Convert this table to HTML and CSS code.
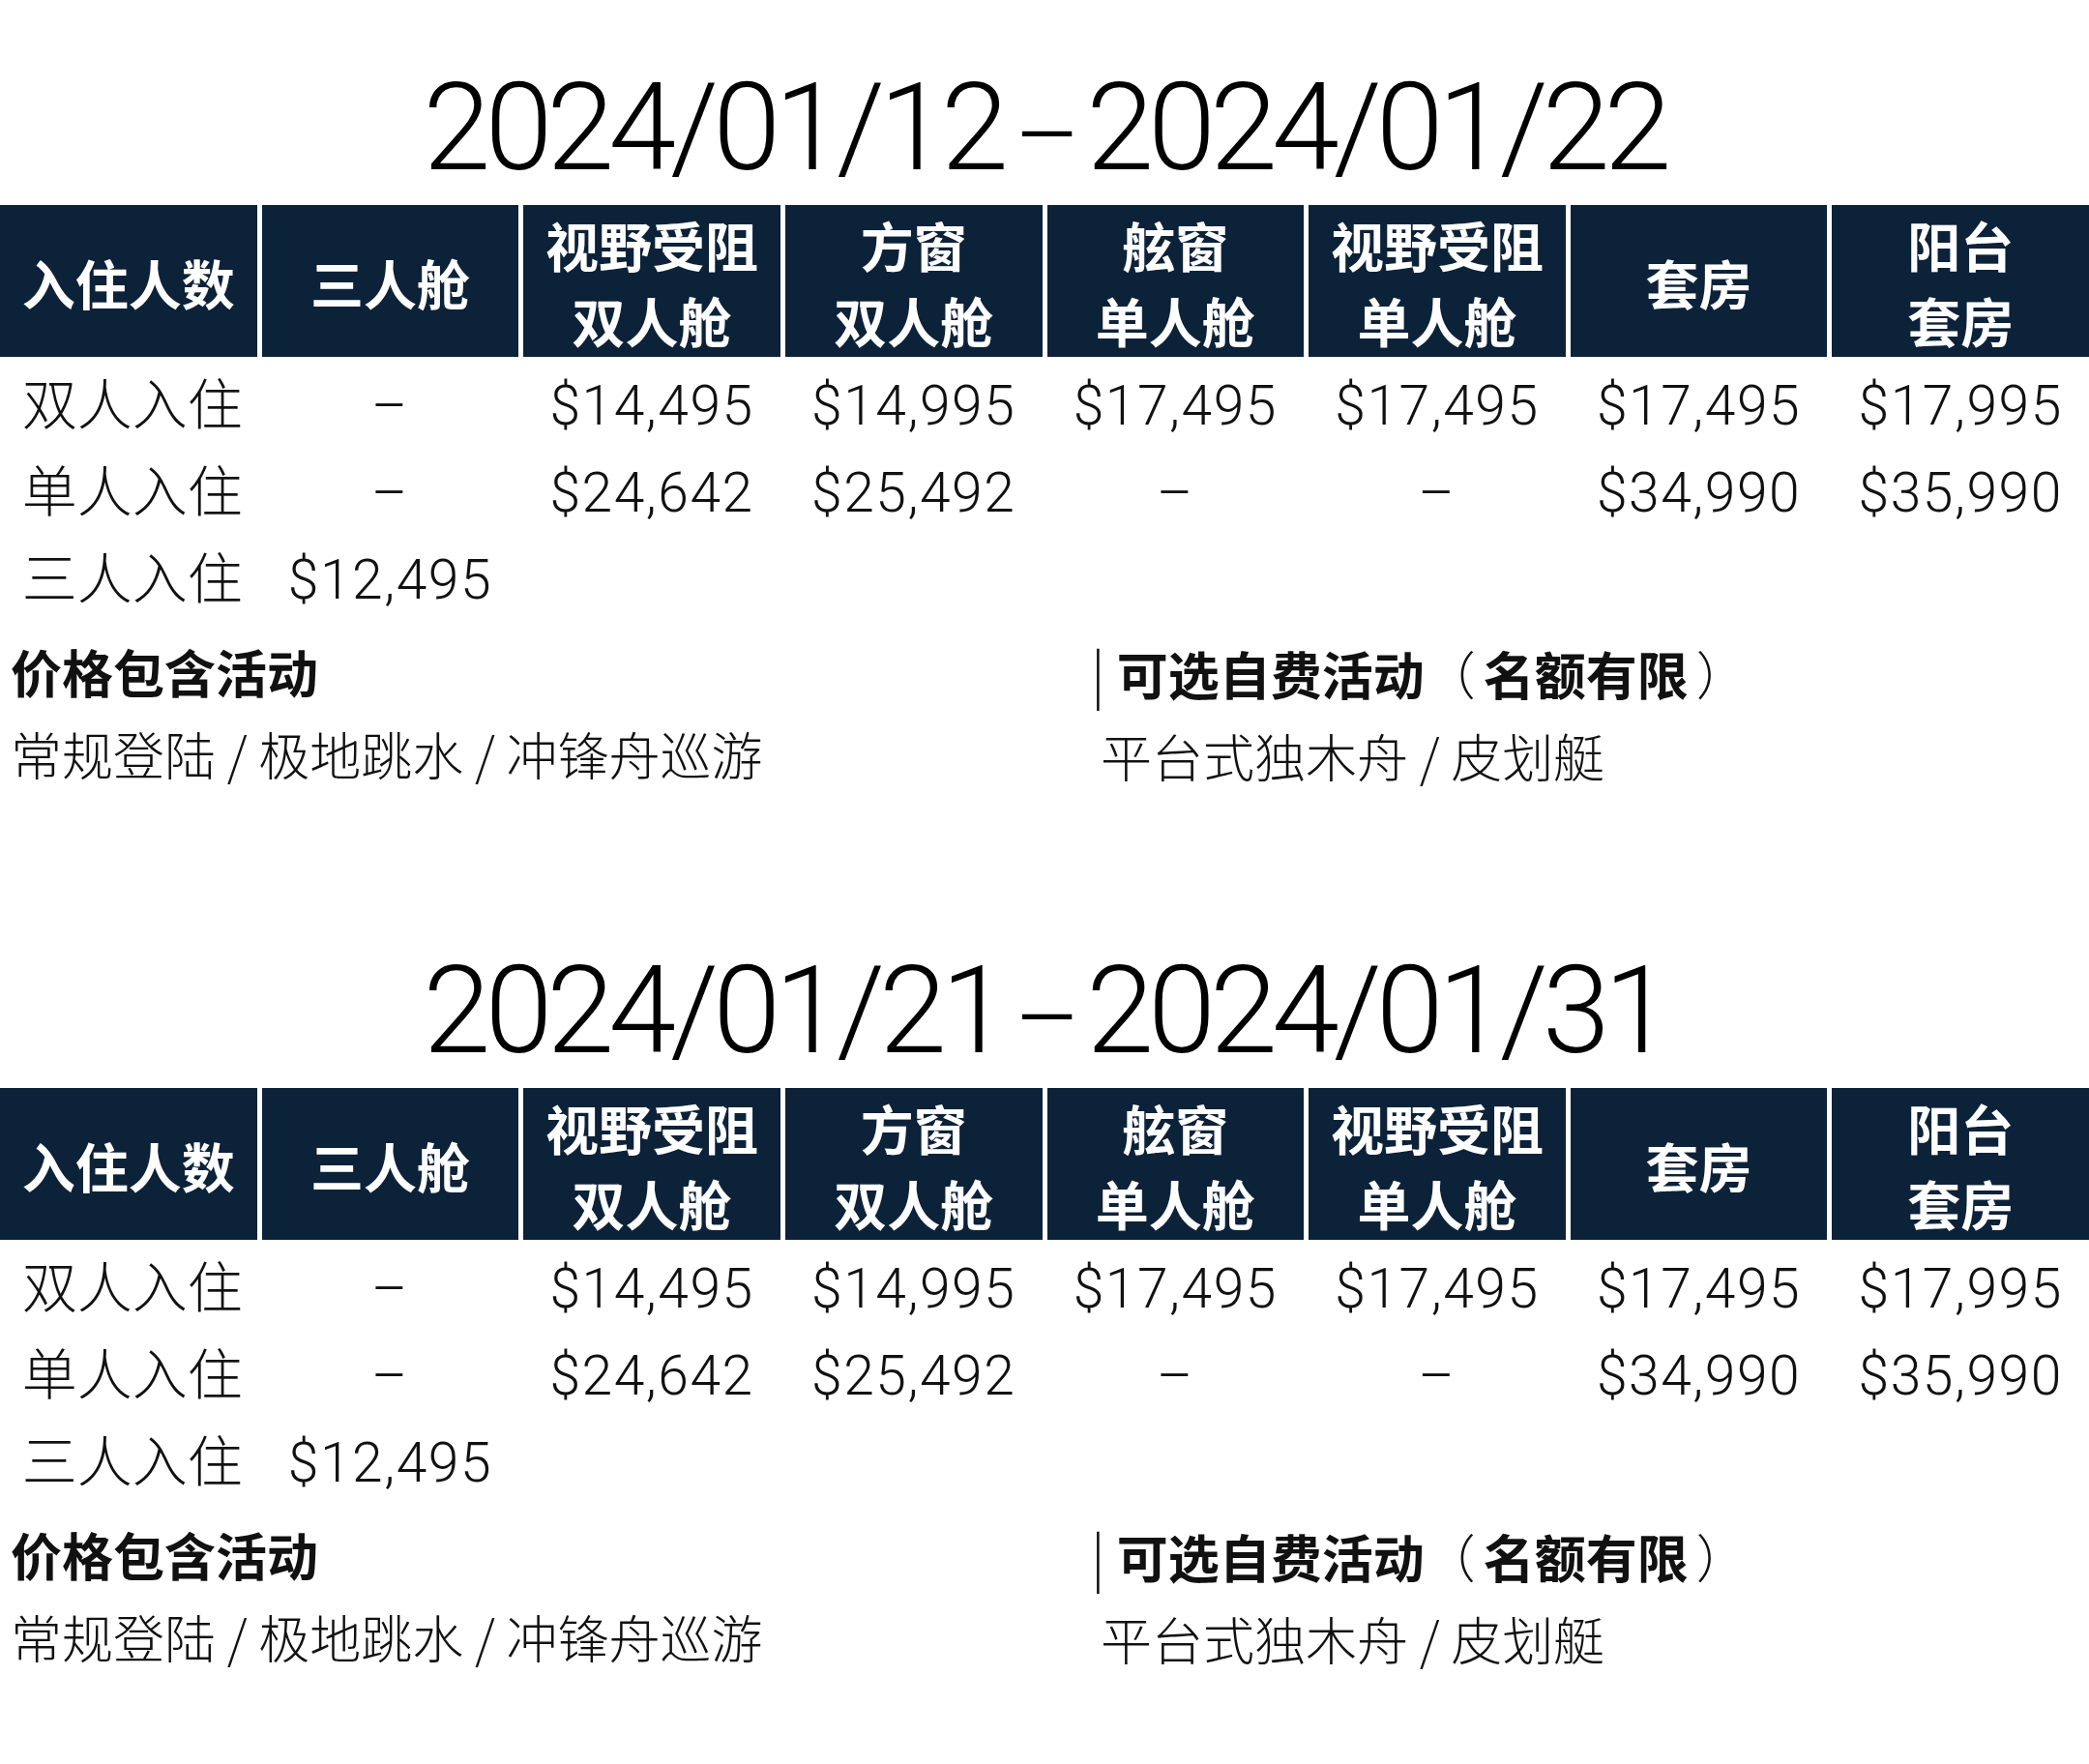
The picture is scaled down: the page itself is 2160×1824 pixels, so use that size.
FILE: index.html
```html
<!DOCTYPE html>
<html lang="zh-CN">
<head>
<meta charset="utf-8">
<title>价格表</title>
<link rel="stylesheet" href="styles.css">
</head>
<body>
<section class="period">
  <h1 class="date">2024/01/12<span class="sep">–</span>2024/01/22</h1>
  <div class="price-grid">
    <div class="th">入住人数</div>
    <div class="th">三人舱</div>
    <div class="th">视野受阻<br>双人舱</div>
    <div class="th">方窗<br>双人舱</div>
    <div class="th">舷窗<br>单人舱</div>
    <div class="th">视野受阻<br>单人舱</div>
    <div class="th">套房</div>
    <div class="th">阳台<br>套房</div>

    <div class="td label">双人入住</div>
    <div class="td">–</div>
    <div class="td">$14,495</div>
    <div class="td">$14,995</div>
    <div class="td">$17,495</div>
    <div class="td">$17,495</div>
    <div class="td">$17,495</div>
    <div class="td">$17,995</div>

    <div class="td label">单人入住</div>
    <div class="td">–</div>
    <div class="td">$24,642</div>
    <div class="td">$25,492</div>
    <div class="td">–</div>
    <div class="td">–</div>
    <div class="td">$34,990</div>
    <div class="td">$35,990</div>

    <div class="td label">三人入住</div>
    <div class="td">$12,495</div>
    <div class="td"></div>
    <div class="td"></div>
    <div class="td"></div>
    <div class="td"></div>
    <div class="td"></div>
    <div class="td"></div>
  </div>
  <div class="activities">
    <div class="act-col">
      <h2 class="act-title">价格包含活动</h2>
      <p class="act-list">常规登陆 / 极地跳水 / 冲锋舟巡游</p>
    </div>
    <div class="act-col act-optional">
      <h2 class="act-title"><span class="bar">|</span> 可选自费活动<span class="paren-open">（</span>名额有限<span class="paren-close">）</span></h2>
      <p class="act-list">平台式独木舟 / 皮划艇</p>
    </div>
  </div>
</section>

<section class="period">
  <h1 class="date">2024/01/21<span class="sep">–</span>2024/01/31</h1>
  <div class="price-grid">
    <div class="th">入住人数</div>
    <div class="th">三人舱</div>
    <div class="th">视野受阻<br>双人舱</div>
    <div class="th">方窗<br>双人舱</div>
    <div class="th">舷窗<br>单人舱</div>
    <div class="th">视野受阻<br>单人舱</div>
    <div class="th">套房</div>
    <div class="th">阳台<br>套房</div>

    <div class="td label">双人入住</div>
    <div class="td">–</div>
    <div class="td">$14,495</div>
    <div class="td">$14,995</div>
    <div class="td">$17,495</div>
    <div class="td">$17,495</div>
    <div class="td">$17,495</div>
    <div class="td">$17,995</div>

    <div class="td label">单人入住</div>
    <div class="td">–</div>
    <div class="td">$24,642</div>
    <div class="td">$25,492</div>
    <div class="td">–</div>
    <div class="td">–</div>
    <div class="td">$34,990</div>
    <div class="td">$35,990</div>

    <div class="td label">三人入住</div>
    <div class="td">$12,495</div>
    <div class="td"></div>
    <div class="td"></div>
    <div class="td"></div>
    <div class="td"></div>
    <div class="td"></div>
    <div class="td"></div>
  </div>
  <div class="activities">
    <div class="act-col">
      <h2 class="act-title">价格包含活动</h2>
      <p class="act-list">常规登陆 / 极地跳水 / 冲锋舟巡游</p>
    </div>
    <div class="act-col act-optional">
      <h2 class="act-title"><span class="bar">|</span> 可选自费活动<span class="paren-open">（</span>名额有限<span class="paren-close">）</span></h2>
      <p class="act-list">平台式独木舟 / 皮划艇</p>
    </div>
  </div>
</section>
</body>
</html>
```

FILE: styles.css
```css
html, body {
  margin: 0;
  padding: 0;
  background: #ffffff;
}

body {
  width: 2160px;
  color: #111111;
  font-family: "Roboto", "Noto Sans CJK SC", sans-serif;
  font-weight: 300;
}

.period {
  height: 913px;
  padding-top: 69px;
  box-sizing: border-box;
}

.date {
  margin: 0;
  font-family: "Roboto", sans-serif;
  font-weight: 300;
  font-size: 126px;
  line-height: 126px;
  letter-spacing: -6px;
  text-align: center;
  color: #000000;
}

.date .sep {
  display: inline-block;
  font-size: 105px;
  letter-spacing: 0;
  margin: 0 6px 0 12px;
  vertical-align: -1px;
  line-height: 105px;
}

.price-grid {
  margin-top: 17px;
  display: grid;
  grid-template-columns: repeat(8, 1fr);
  grid-template-rows: 157px repeat(3, 90px);
  column-gap: 5px;
}

.th {
  background: #0c2239;
  color: #ffffff;
  font-family: "Noto Sans CJK SC", sans-serif;
  font-weight: 700;
  font-size: 55px;
  line-height: 78px;
  display: flex;
  align-items: center;
  justify-content: center;
  text-align: center;
}

.td {
  padding-top: 12px;
  font-family: "Roboto", "Noto Sans CJK SC", sans-serif;
  font-weight: 300;
  font-size: 57px;
  line-height: 78px;
  letter-spacing: 1.5px;
  text-align: center;
  color: #111111;
}

.td.label {
  letter-spacing: 0;
  padding-left: 8px;
}

.activities {
  margin-top: 15px;
  display: grid;
  grid-template-columns: 1117px 1fr;
  padding-left: 11px;
}

.act-title {
  margin: 0;
  font-family: "Noto Sans CJK SC", sans-serif;
  font-weight: 700;
  font-size: 53px;
  line-height: 80px;
  color: #111111;
}

.act-list {
  margin: 5px 0 0;
  font-family: "Noto Sans CJK SC", sans-serif;
  font-weight: 300;
  font-size: 53px;
  line-height: 80px;
  color: #111111;
}

.act-optional .act-list {
  padding-left: 10px;
}

.bar {
  font-family: "Noto Sans CJK SC", sans-serif;
  font-weight: 300;
  font-size: 58px;
  line-height: 80px;
}

.paren-open,
.paren-close {
  font-weight: 300;
}

.paren-open {
  margin-right: 0.15em;
}

.paren-close {
  margin-left: 0.15em;
}
```
